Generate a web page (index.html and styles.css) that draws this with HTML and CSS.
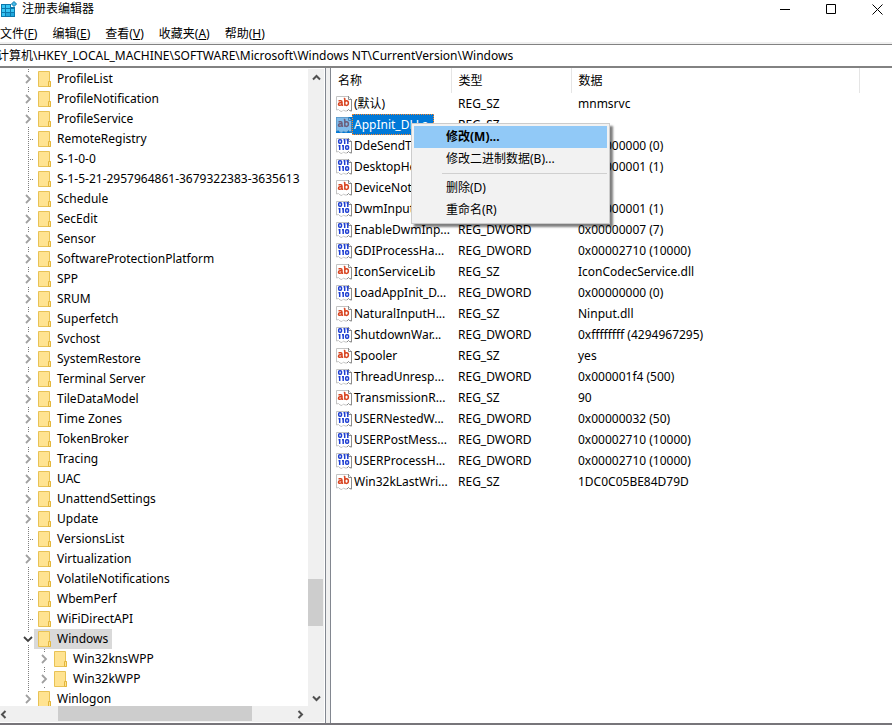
FILE: index.html
```html
<!DOCTYPE html>
<html lang="zh-CN">
<head>
    <meta charset="UTF-8">
    <meta name="viewport" content="width=device-width, initial-scale=1.0">
    <title>注册表编辑器</title>
    <link rel="stylesheet" href="styles.css">
</head>
<body>
    <!-- Shared icons -->
    <svg class="icon-defs" width="0" height="0">
        <symbol id="icon-page" viewBox="0 0 16 16">
            <path d="M.5.5h12l3 3v11.500l-2-.5-1-1-1.500 1.500h-2l-1.500-1-1.500 1.500-2-.5-1.500-1.500-2 .5z" fill="#fff" stroke="#c4c4c4"/>
            <path d="M12.500 0v3.500H16M15.500 3v12l-2-.5-1-1-1.500 1.500" fill="none" stroke="#8c8c8c"/>
        </symbol>
        <symbol id="icon-sz" viewBox="0 0 16 16">
            <use href="#icon-page"/>
            <g fill="none" stroke="#d8431f" stroke-width="1.500">
                <path d="M2.500 4.800h2.300q1.200 0 1.200 1.400v3.600M6 6.800H3.800Q2.500 7 2.500 8.200t1.500 1.100Q5.300 9.300 6 8M6 9.300h1.200"/>
                <path d="M8.800 2.200v7.600M7.800 2.500h1M8.800 5.800q.7-1 1.700-1 1.900 0 1.900 2.300t-1.900 2.300q-1 0-1.700-1"/>
            </g>
        </symbol>
        <symbol id="icon-dword" viewBox="0 0 16 16">
            <use href="#icon-page"/>
            <g fill="none" stroke="#1f3fd2" stroke-width="1.500">
                <rect x="2.700" y="1.700" width="2.800" height="3.600" rx="1"/>
                <path d="M8.700 1v5M7.500 1.700h1.200M11.800 1v5M10.500 1.700h1.300"/>
                <path d="M3.700 7v5M2.500 7.700h1.200M7.200 7v5M6 7.700h1.200"/>
                <rect x="9.700" y="7.700" width="2.800" height="3.600" rx="1"/>
            </g>
        </symbol>
        <symbol id="icon-folder" viewBox="0 0 13 16">
            <path d="M.5.5h11v10h1v5H.5z" fill="#ffe391" stroke="#e8c255"/>
            <path d="M10.500 15.500v-5h2v5z" fill="#ffe391" stroke="#e3b63c"/>
        </symbol>
        <symbol id="icon-closed" viewBox="0 0 8 10">
            <path d="M2 1l4 4-4 4" fill="none" stroke="#a0a0a0" stroke-width="1.800"/>
        </symbol>
        <symbol id="icon-open" viewBox="0 0 10 8">
            <path d="M1 2l4 4 4-4" fill="none" stroke="#404040" stroke-width="1.800"/>
        </symbol>
    </svg>

    <header class="title-bar">
        <svg class="app-icon" viewBox="0 0 16 16">
            <path d="M0 3h10v3h4v10H0z" fill="#0b78ac"/>
            <g fill="#39c5f3">
                <path d="M1 4h3v3H1zM5 4h4v3H5zM1 8h3v3H1zM5 8h4v3H5zM10 8h3v3h-3zM1 12h3v3H1z"/>
                <path d="M5 12h4v3H5zM10 12h3v3h-3z" fill="#1fa6dc"/>
            </g>
            <path d="M13 .5l2.500 2.500L13 5.500 10.500 3z" fill="#45b9e8" stroke="#0b78ac"/>
        </svg>
        <h1>注册表编辑器</h1>
        <div class="window-controls">
            <button aria-label="最小化"><svg viewBox="0 0 11 11"><path d="M0 5.500h10"/></svg></button>
            <button aria-label="最大化"><svg viewBox="0 0 11 11"><path d="M.5.5h9v9h-9z"/></svg></button>
            <button aria-label="关闭"><svg viewBox="0 0 11 11"><path d="M.5.5l10 10M10.500.5l-10 10"/></svg></button>
        </div>
    </header>

    <nav class="menu-bar">
        <button>文件(<u>F</u>)</button>
        <button>编辑(<u>E</u>)</button>
        <button>查看(<u>V</u>)</button>
        <button>收藏夹(<u>A</u>)</button>
        <button>帮助(<u>H</u>)</button>
    </nav>

    <input class="address" type="text" aria-label="地址" value="计算机\HKEY_LOCAL_MACHINE\SOFTWARE\Microsoft\Windows NT\CurrentVersion\Windows">

    <main class="panes">
        <section class="tree-pane">
            <ul class="tree">
                <li><div class="row"><button class="twisty" aria-label="展开"><svg><use href="#icon-closed"/></svg></button><span class="node"><svg><use href="#icon-folder"/></svg>ProfileList</span></div></li>
                <li><div class="row"><button class="twisty" aria-label="展开"><svg><use href="#icon-closed"/></svg></button><span class="node"><svg><use href="#icon-folder"/></svg>ProfileNotification</span></div></li>
                <li><div class="row"><button class="twisty" aria-label="展开"><svg><use href="#icon-closed"/></svg></button><span class="node"><svg><use href="#icon-folder"/></svg>ProfileService</span></div></li>
                <li><div class="row"><span class="leaf"></span><span class="node"><svg><use href="#icon-folder"/></svg>RemoteRegistry</span></div></li>
                <li><div class="row"><span class="leaf"></span><span class="node"><svg><use href="#icon-folder"/></svg>S-1-0-0</span></div></li>
                <li><div class="row"><span class="leaf"></span><span class="node"><svg><use href="#icon-folder"/></svg>S-1-5-21-2957964861-3679322383-3635613</span></div></li>
                <li><div class="row"><button class="twisty" aria-label="展开"><svg><use href="#icon-closed"/></svg></button><span class="node"><svg><use href="#icon-folder"/></svg>Schedule</span></div></li>
                <li><div class="row"><button class="twisty" aria-label="展开"><svg><use href="#icon-closed"/></svg></button><span class="node"><svg><use href="#icon-folder"/></svg>SecEdit</span></div></li>
                <li><div class="row"><button class="twisty" aria-label="展开"><svg><use href="#icon-closed"/></svg></button><span class="node"><svg><use href="#icon-folder"/></svg>Sensor</span></div></li>
                <li><div class="row"><button class="twisty" aria-label="展开"><svg><use href="#icon-closed"/></svg></button><span class="node"><svg><use href="#icon-folder"/></svg>SoftwareProtectionPlatform</span></div></li>
                <li><div class="row"><button class="twisty" aria-label="展开"><svg><use href="#icon-closed"/></svg></button><span class="node"><svg><use href="#icon-folder"/></svg>SPP</span></div></li>
                <li><div class="row"><button class="twisty" aria-label="展开"><svg><use href="#icon-closed"/></svg></button><span class="node"><svg><use href="#icon-folder"/></svg>SRUM</span></div></li>
                <li><div class="row"><button class="twisty" aria-label="展开"><svg><use href="#icon-closed"/></svg></button><span class="node"><svg><use href="#icon-folder"/></svg>Superfetch</span></div></li>
                <li><div class="row"><button class="twisty" aria-label="展开"><svg><use href="#icon-closed"/></svg></button><span class="node"><svg><use href="#icon-folder"/></svg>Svchost</span></div></li>
                <li><div class="row"><button class="twisty" aria-label="展开"><svg><use href="#icon-closed"/></svg></button><span class="node"><svg><use href="#icon-folder"/></svg>SystemRestore</span></div></li>
                <li><div class="row"><button class="twisty" aria-label="展开"><svg><use href="#icon-closed"/></svg></button><span class="node"><svg><use href="#icon-folder"/></svg>Terminal Server</span></div></li>
                <li><div class="row"><button class="twisty" aria-label="展开"><svg><use href="#icon-closed"/></svg></button><span class="node"><svg><use href="#icon-folder"/></svg>TileDataModel</span></div></li>
                <li><div class="row"><button class="twisty" aria-label="展开"><svg><use href="#icon-closed"/></svg></button><span class="node"><svg><use href="#icon-folder"/></svg>Time Zones</span></div></li>
                <li><div class="row"><button class="twisty" aria-label="展开"><svg><use href="#icon-closed"/></svg></button><span class="node"><svg><use href="#icon-folder"/></svg>TokenBroker</span></div></li>
                <li><div class="row"><button class="twisty" aria-label="展开"><svg><use href="#icon-closed"/></svg></button><span class="node"><svg><use href="#icon-folder"/></svg>Tracing</span></div></li>
                <li><div class="row"><button class="twisty" aria-label="展开"><svg><use href="#icon-closed"/></svg></button><span class="node"><svg><use href="#icon-folder"/></svg>UAC</span></div></li>
                <li><div class="row"><button class="twisty" aria-label="展开"><svg><use href="#icon-closed"/></svg></button><span class="node"><svg><use href="#icon-folder"/></svg>UnattendSettings</span></div></li>
                <li><div class="row"><button class="twisty" aria-label="展开"><svg><use href="#icon-closed"/></svg></button><span class="node"><svg><use href="#icon-folder"/></svg>Update</span></div></li>
                <li><div class="row"><span class="leaf"></span><span class="node"><svg><use href="#icon-folder"/></svg>VersionsList</span></div></li>
                <li><div class="row"><button class="twisty" aria-label="展开"><svg><use href="#icon-closed"/></svg></button><span class="node"><svg><use href="#icon-folder"/></svg>Virtualization</span></div></li>
                <li><div class="row"><span class="leaf"></span><span class="node"><svg><use href="#icon-folder"/></svg>VolatileNotifications</span></div></li>
                <li><div class="row"><span class="leaf"></span><span class="node"><svg><use href="#icon-folder"/></svg>WbemPerf</span></div></li>
                <li><div class="row"><span class="leaf"></span><span class="node"><svg><use href="#icon-folder"/></svg>WiFiDirectAPI</span></div></li>
                <li>
                    <div class="row"><button class="twisty open" aria-label="折叠"><svg><use href="#icon-open"/></svg></button><span class="node selected"><svg><use href="#icon-folder"/></svg>Windows</span></div>
                    <ul>
                        <li><div class="row"><button class="twisty" aria-label="展开"><svg><use href="#icon-closed"/></svg></button><span class="node"><svg><use href="#icon-folder"/></svg>Win32knsWPP</span></div></li>
                        <li><div class="row"><button class="twisty" aria-label="展开"><svg><use href="#icon-closed"/></svg></button><span class="node"><svg><use href="#icon-folder"/></svg>Win32kWPP</span></div></li>
                    </ul>
                </li>
                <li><div class="row"><button class="twisty" aria-label="展开"><svg><use href="#icon-closed"/></svg></button><span class="node"><svg><use href="#icon-folder"/></svg>Winlogon</span></div></li>
            </ul>
            <div class="scrollbar vertical">
                <button aria-label="向上滚动"><svg viewBox="0 0 9 9"><path d="M1 6.500L4.500 3 8 6.500"/></svg></button>
                <div class="track before"></div>
                <div class="thumb"></div>
                <div class="track after"></div>
                <button aria-label="向下滚动"><svg viewBox="0 0 9 9"><path d="M1 2.500L4.500 6 8 2.500"/></svg></button>
            </div>
            <div class="scrollbar horizontal">
                <button aria-label="向左滚动"><svg viewBox="0 0 9 9"><path d="M6.500 1L3 4.500 6.500 8"/></svg></button>
                <div class="track before"></div>
                <div class="thumb"></div>
                <div class="track after"></div>
                <button aria-label="向右滚动"><svg viewBox="0 0 9 9"><path d="M2.500 1L6 4.500 2.500 8"/></svg></button>
            </div>
            <div class="corner"></div>
        </section>

        <section class="list-pane">
            <table class="values">
                <colgroup>
                    <col class="col-name">
                    <col class="col-type">
                    <col class="col-data">
                    <col>
                </colgroup>
                <thead>
                    <tr><th>名称</th><th>类型</th><th>数据</th><td></td></tr>
                </thead>
                <tbody>
                    <tr><td><span class="name"><svg><use href="#icon-sz"/></svg><span>(默认)</span></span></td><td>REG_SZ</td><td>mnmsrvc</td></tr>
                    <tr class="selected"><td><span class="name"><svg><use href="#icon-sz"/></svg><span>AppInit_DLLs</span></span></td><td>REG_SZ</td><td></td></tr>
                    <tr><td><span class="name"><svg><use href="#icon-dword"/></svg><span>DdeSendTi...</span></span></td><td>REG_DWORD</td><td>0x00000000 (0)</td></tr>
                    <tr><td><span class="name"><svg><use href="#icon-dword"/></svg><span>DesktopHe...</span></span></td><td>REG_DWORD</td><td>0x00000001 (1)</td></tr>
                    <tr><td><span class="name"><svg><use href="#icon-sz"/></svg><span>DeviceNotS...</span></span></td><td>REG_SZ</td><td>15</td></tr>
                    <tr><td><span class="name"><svg><use href="#icon-dword"/></svg><span>DwmInputU...</span></span></td><td>REG_DWORD</td><td>0x00000001 (1)</td></tr>
                    <tr><td><span class="name"><svg><use href="#icon-dword"/></svg><span>EnableDwmInp...</span></span></td><td>REG_DWORD</td><td>0x00000007 (7)</td></tr>
                    <tr><td><span class="name"><svg><use href="#icon-dword"/></svg><span>GDIProcessHa...</span></span></td><td>REG_DWORD</td><td>0x00002710 (10000)</td></tr>
                    <tr><td><span class="name"><svg><use href="#icon-sz"/></svg><span>IconServiceLib</span></span></td><td>REG_SZ</td><td>IconCodecService.dll</td></tr>
                    <tr><td><span class="name"><svg><use href="#icon-dword"/></svg><span>LoadAppInit_D...</span></span></td><td>REG_DWORD</td><td>0x00000000 (0)</td></tr>
                    <tr><td><span class="name"><svg><use href="#icon-sz"/></svg><span>NaturalInputH...</span></span></td><td>REG_SZ</td><td>Ninput.dll</td></tr>
                    <tr><td><span class="name"><svg><use href="#icon-dword"/></svg><span>ShutdownWar...</span></span></td><td>REG_DWORD</td><td>0xffffffff (4294967295)</td></tr>
                    <tr><td><span class="name"><svg><use href="#icon-sz"/></svg><span>Spooler</span></span></td><td>REG_SZ</td><td>yes</td></tr>
                    <tr><td><span class="name"><svg><use href="#icon-dword"/></svg><span>ThreadUnresp...</span></span></td><td>REG_DWORD</td><td>0x000001f4 (500)</td></tr>
                    <tr><td><span class="name"><svg><use href="#icon-sz"/></svg><span>TransmissionR...</span></span></td><td>REG_SZ</td><td>90</td></tr>
                    <tr><td><span class="name"><svg><use href="#icon-dword"/></svg><span>USERNestedW...</span></span></td><td>REG_DWORD</td><td>0x00000032 (50)</td></tr>
                    <tr><td><span class="name"><svg><use href="#icon-dword"/></svg><span>USERPostMess...</span></span></td><td>REG_DWORD</td><td>0x00002710 (10000)</td></tr>
                    <tr><td><span class="name"><svg><use href="#icon-dword"/></svg><span>USERProcessH...</span></span></td><td>REG_DWORD</td><td>0x00002710 (10000)</td></tr>
                    <tr><td><span class="name"><svg><use href="#icon-sz"/></svg><span>Win32kLastWri...</span></span></td><td>REG_SZ</td><td>1DC0C05BE84D79D</td></tr>
                </tbody>
            </table>

            <!-- Right-click menu for the selected value -->
            <div class="context-menu">
                <button class="default">修改(M)...</button>
                <button>修改二进制数据(B)...</button>
                <hr>
                <button>删除(D)</button>
                <button>重命名(R)</button>
            </div>
        </section>
    </main>
</body>
</html>
```
FILE: styles.css
```css
/* General styles */
* {
    box-sizing: border-box;
}

body {
    margin: 0;
    height: 100vh;
    display: flex;
    flex-direction: column;
    overflow: hidden;
    background-color: #ffffff;
    color: #000000;
    font-family: "Noto Sans", "Noto Sans CJK SC", sans-serif;
    font-size: 12px;
    line-height: 20px;
    border-bottom: 2px solid #77757a;
}

button {
    padding: 0;
    border: none;
    background: none;
    color: inherit;
    font: inherit;
}

.icon-defs {
    position: absolute;
}

/* Title bar */
.title-bar {
    display: flex;
    align-items: center;
    height: 18px;
    flex: none;
    padding-left: 1px;
}

.app-icon {
    width: 16px;
    height: 16px;
    margin-right: 5px;
}

.title-bar h1 {
    margin: 0;
    flex: 1;
    font-size: 12px;
    font-weight: normal;
}

.window-controls {
    display: flex;
    margin-right: -8px;
}

.window-controls button {
    width: 46px;
    height: 16px;
    display: flex;
    align-items: center;
    justify-content: center;
}

.window-controls svg {
    width: 11px;
    height: 11px;
    fill: none;
    stroke: #000000;
}

/* Menu bar */
.menu-bar {
    display: flex;
    gap: 15px;
    flex: none;
    height: 26px;
    padding-top: 6px;
    border-bottom: 2px solid #f0f0f0;
}

.menu-bar button {
    line-height: 20px;
}

.address {
    flex: none;
    width: 100%;
    height: 24px;
    padding: 0 0 1px;
    border: solid #828282;
    border-width: 1px 0 2px;
    border-radius: 0;
    font: inherit;
    text-indent: -3px;
    outline: none;
}

/* Panes */
.panes {
    flex: 1;
    min-height: 0;
    display: flex;
    gap: 4px;
    background-color: #f0f0f0;
}

.tree-pane {
    flex: none;
    width: 326px;
    display: grid;
    grid-template-columns: 1fr 16px;
    grid-template-rows: 1fr 16px;
    padding: 1px 1px 1px 0;
    border-right: 1px solid #828790;
    background-color: #ffffff;
}

.list-pane {
    flex: 1;
    min-width: 0;
    position: relative;
    border-left: 1px solid #828790;
    background-color: #ffffff;
}

/* Tree */
.tree {
    overflow: hidden;
    padding-left: 20px;
}

.tree,
.tree ul {
    margin: 0;
    list-style: none;
}

.tree ul {
    padding-left: 16px;
}

.tree li {
    background: repeating-linear-gradient(#808080 0 1px, transparent 1px 2px) 8px 0 / 1px 100% no-repeat;
}

.row {
    display: flex;
    align-items: center;
    height: 20px;
    white-space: nowrap;
}

.twisty,
.leaf {
    flex: none;
    width: 14px;
}

.twisty {
    display: flex;
    justify-content: center;
    padding: 2px 0 2px 2px;
    background-color: #ffffff;
}

.twisty svg {
    width: 8px;
    height: 10px;
}

.twisty.open svg {
    width: 10px;
    height: 8px;
}

.leaf {
    height: 1px;
    background: repeating-linear-gradient(90deg, #808080 0 1px, transparent 1px 2px) 8px 0 / 6px 1px no-repeat;
}

.node {
    display: flex;
    align-items: center;
    gap: 6px;
    padding: 0 4px;
}

.node svg {
    flex: none;
    width: 13px;
    height: 16px;
}

.node.selected {
    background-color: #d9d9d9;
}

/* Scrollbars */
.scrollbar {
    display: flex;
    background-color: #f0f0f0;
}

.scrollbar.vertical {
    flex-direction: column;
}

.scrollbar button {
    display: flex;
    align-items: center;
    justify-content: center;
    width: 16px;
    height: 16px;
}

.scrollbar.horizontal button:first-child {
    width: 6px;
}

.scrollbar svg {
    flex: none;
    width: 9px;
    height: 9px;
    fill: none;
    stroke: #505050;
    stroke-width: 2;
}

.thumb {
    background-color: #cdcdcd;
}

.vertical .thumb {
    height: 47px;
    margin-right: 1px;
}

.horizontal .thumb {
    width: 194px;
    margin-bottom: 1px;
}

.vertical .before {
    flex: 494;
}

.vertical .after {
    flex: 64;
}

.horizontal .before {
    flex: 52;
}

.horizontal .after {
    flex: 40;
}

.corner {
    background-color: #f0f0f0;
}

/* Value list */
.values {
    width: 100%;
    table-layout: fixed;
    border-collapse: collapse;
}

.col-name,
.col-type {
    width: 120px;
}

.col-data {
    width: 288px;
}

.values th {
    height: 25px;
    padding: 0 7px;
    border-right: 1px solid #e5e5e5;
    font-weight: normal;
    text-align: left;
}

.values tbody td {
    height: 21px;
    padding: 0 7px;
    white-space: nowrap;
}

.values tbody td:first-child {
    padding: 0 0 0 5px;
}

.name {
    display: flex;
    align-items: center;
    height: 21px;
}

.name svg {
    flex: none;
    width: 16px;
    height: 16px;
}

.name span {
    padding: 0 2px;
}

.selected .name svg {
    background-color: #0078d7;
}

.selected .name use {
    opacity: 0.5;
}

.selected .name span {
    width: 82px;
    padding: 0 1px;
    border: 1px dotted #ff8728;
    background-color: #0078d7;
    color: #ffffff;
    line-height: 19px;
}

/* Context menu */
.context-menu {
    position: absolute;
    left: 80px;
    top: 55px;
    width: 199px;
    padding: 2px;
    border: 1px solid #cccccc;
    background-color: #f2f2f2;
    box-shadow: 3px 3px 2px rgba(0, 0, 0, 0.5);
}

.context-menu button {
    display: block;
    width: 100%;
    height: 22px;
    padding-left: 32px;
    text-align: left;
}

.context-menu .default {
    background-color: #91c9f7;
    font-weight: bold;
}

.context-menu hr {
    height: 1px;
    margin: 3px 0 3px 28px;
    border: none;
    background-color: #d0d0d0;
}
```
